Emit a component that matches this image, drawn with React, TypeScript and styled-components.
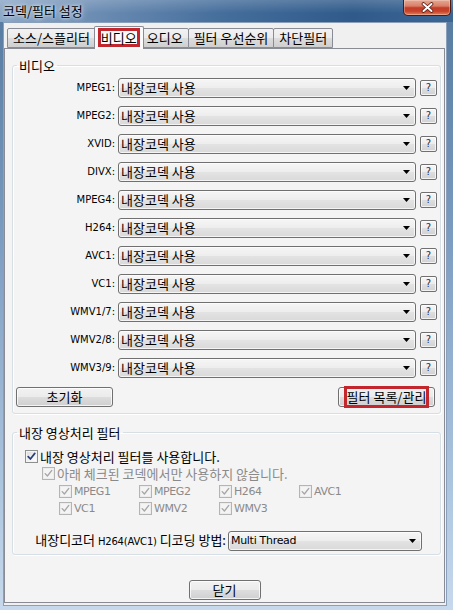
import React from "react";
import styled, { createGlobalStyle } from "styled-components";

const KO = `"Noto Sans CJK KR", "Noto Sans", sans-serif`;
const LAT = `"DejaVu Sans", "Noto Sans", sans-serif`;

const GlobalStyle = createGlobalStyle`
  html, body { margin: 0; padding: 0; }
  body {
    width: 453px; height: 610px; overflow: hidden;
    background: #6d8fb6;
    font-family: ${KO};
  }
  * { box-sizing: border-box; }
`;

const Window = styled.div`
  width: 453px;
  height: 610px;
  display: flex;
  flex-direction: column;
  background: linear-gradient(#54799f 0%, #7d9dc2 40%, #b3cbe3 85%, #c7d9ec 100%);
`;

const TitleBar = styled.div`
  height: 22px;
  flex: none;
  display: flex;
  align-items: flex-start;
  justify-content: space-between;
  background:
    linear-gradient(rgba(255,255,255,0.18), rgba(255,255,255,0) 60%),
    linear-gradient(to right, #8aa6c6 0%, #6a8bb2 22%, #446d9b 50%, #2f5a8a 78%, #3b6694 100%);
`;

const Title = styled.div`
  padding-left: 3px;
  font: 13px/21px ${KO};
  color: #000;
  text-shadow: 0 0 6px rgba(255,255,255,0.9), 0 0 3px rgba(255,255,255,0.8);
`;

const CloseButton = styled.div`
  width: 48px;
  height: 16px;
  margin-right: 2px;
  border: 1px solid #4a1c16;
  border-top: none;
  border-radius: 0 0 5px 5px;
  background: linear-gradient(#e6a894 0%, #d98068 40%, #c43c27 52%, #c8432b 75%, #e0835c 100%);
  box-shadow: inset 0 0 0 1px rgba(255,230,220,0.35);
  display: flex;
  align-items: center;
  justify-content: center;
`;

const Frame = styled.div`
  flex: 1;
  display: flex;
  padding: 0 6px 4px 3px;
`;

const Client = styled.div`
  flex: 1;
  display: flex;
  flex-direction: column;
  background: #f0f0f0;
  border: 1px solid #8aa0ba;
`;

const TabStrip = styled.div`
  height: 25px;
  flex: none;
  display: flex;
  align-items: flex-end;
  padding-left: 3px;
  position: relative;
  z-index: 1;
`;

const Tab = styled.div<{ $active?: boolean }>`
  height: ${(p) => (p.$active ? "23px" : "20px")};
  margin: ${(p) => (p.$active ? "0 -2px -1px -2px" : "0 0 0 -1px")};
  padding: ${(p) => (p.$active ? "0 3px" : "0 5px")};
  border: 1px solid #898c95;
  border-bottom: ${(p) => (p.$active ? "none" : "1px solid #898c95")};
  border-radius: 2px 2px 0 0;
  background: ${(p) =>
    p.$active
      ? "#fbfbfb"
      : "linear-gradient(#f2f2f2 0%, #ebebeb 50%, #dddddd 50%, #cfcfcf 100%)"};
  display: flex;
  align-items: ${(p) => (p.$active ? "flex-start" : "center")};
  padding-top: ${(p) => (p.$active ? "1px" : "0")};
  font: 13px/16px ${KO};
  color: #000;
  position: relative;
  z-index: ${(p) => (p.$active ? 2 : 1)};
  &:first-child { margin-left: 0; }
`;

const Marked = styled.span<{ $h: number }>`
  display: inline-flex;
  align-items: center;
  height: ${(p) => p.$h}px;
  border: 3px solid #c4262d;
  padding: 0;
  white-space: nowrap;
`;

const Panel = styled.div`
  flex: 1;
  margin: 0 1px 2px 0;
  border: 1px solid #898c95;
  background: #f4f4f4;
  padding: 9px 3px 0 7px;
  display: flex;
  flex-direction: column;
`;

const Group = styled.fieldset<{ $spaced?: boolean }>`
  margin: ${(p) => (p.$spaced ? "11px" : "0")} 0 0 0;
  padding: 0 0 6px 0;
  min-width: 0;
  border: 1px solid #d5dfe5;
  border-radius: 3px;
  box-shadow: inset 1px 1px 0 #fff, 1px 1px 0 #fff;
`;

const Legend = styled.legend`
  margin-left: 4px;
  padding: 0 2px;
  font: 13px/15px ${KO};
  color: #000;
`;

const CodecGrid = styled.div`
  display: grid;
  grid-template-columns: 102px 298px 17px;
  grid-auto-rows: 20px;
  column-gap: 3px;
  row-gap: 8px;
  margin-top: 5px;
  align-items: center;
`;

const CodecLabel = styled.div`
  text-align: right;
  font: 10px/20px ${LAT};
  color: #000;
`;

const Combo = styled.div<{ $w?: number }>`
  height: 20px;
  ${(p) => (p.$w ? `width: ${p.$w}px;` : "")}
  border: 1px solid #707070;
  border-radius: 3px;
  background: linear-gradient(#f6f6f6 0%, #ededed 50%, #e3e3e3 51%, #d9d9d9 100%);
  box-shadow: inset 0 0 0 1px rgba(255,255,255,0.7);
  display: flex;
  align-items: center;
  justify-content: space-between;
  padding: 0 5px 0 2px;
`;

const ComboText = styled.span<{ $latin?: boolean }>`
  font: ${(p) => (p.$latin ? `11px/18px ${LAT}` : `13px/18px ${KO}`)};
  ${(p) => (p.$latin ? "letter-spacing: -0.3px;" : "")}
  color: #000;
  white-space: nowrap;
`;

const HelpButton = styled.div`
  width: 17px;
  height: 16px;
  margin-left: 1px;
  border: 1px solid #707070;
  border-radius: 2px;
  background: linear-gradient(#f6f6f6 0%, #ececec 50%, #dedede 51%, #d2d2d2 100%);
  box-shadow: inset 0 0 0 1px rgba(255,255,255,0.7);
  display: flex;
  align-items: center;
  justify-content: center;
  font: 10px/14px ${LAT};
  color: #1e2f50;
`;

const ButtonRow = styled.div`
  display: flex;
  justify-content: space-between;
  margin-top: 9px;
  padding: 0 5px 0 3px;
`;

const PushButton = styled.div<{ $w: number }>`
  width: ${(p) => p.$w}px;
  height: 20px;
  border: 1px solid #707070;
  border-radius: 3px;
  background: linear-gradient(#f2f2f2 0%, #ebebeb 50%, #dddddd 51%, #cfcfcf 100%);
  box-shadow: inset 0 0 0 1px rgba(255,255,255,0.75);
  display: flex;
  align-items: center;
  justify-content: center;
  font: 13px/18px ${KO};
  color: #000;
`;

const CheckRow = styled.div<{ $indent: number }>`
  height: 17px;
  display: flex;
  align-items: center;
  padding-left: ${(p) => p.$indent}px;
`;

const CheckRowFirst = styled(CheckRow)`
  margin-top: 8px;
`;

const CheckGrid = styled.div`
  display: grid;
  grid-template-columns: repeat(4, 80px);
  grid-auto-rows: 17px;
  padding-left: 46px;
  margin-top: 1px;
`;

const CheckItem = styled.div`
  display: flex;
  align-items: center;
`;

const Box = styled.span<{ $disabled?: boolean }>`
  width: 13px;
  height: 13px;
  flex: none;
  border: 1px solid ${(p) => (p.$disabled ? "#b4b4b4" : "#8e8f8f")};
  background: ${(p) =>
    p.$disabled ? "#f4f4f4" : "linear-gradient(135deg, #d6d6d6 0%, #f4f4f4 60%, #ffffff 100%)"};
  box-shadow: inset 0 0 0 1px ${(p) => (p.$disabled ? "#ececec" : "#f4f4f4")};
  display: flex;
  align-items: center;
  justify-content: center;
  margin-right: 2px;
`;

const CheckLabel = styled.span<{ $disabled?: boolean; $latin?: boolean }>`
  font: ${(p) => (p.$latin ? `11px/17px ${LAT}` : `13px/17px ${KO}`)};
  ${(p) => (p.$latin ? "letter-spacing: -0.4px;" : "")}
  color: ${(p) => (p.$disabled ? "#8a8a8a" : "#000")};
  white-space: nowrap;
`;

const DecodeRow = styled.div`
  display: flex;
  align-items: center;
  justify-content: flex-end;
  margin-top: 12px;
  padding-right: 18px;
  margin-bottom: -4px;
`;

const DecodeLabel = styled.span`
  font: 13px/21px ${KO};
  color: #000;
  margin-right: 2px;
  white-space: nowrap;
`;

const SmallLatin = styled.span`
  font: 10px/21px ${LAT};
  letter-spacing: -0.2px;
`;

const Footer = styled.div`
  display: flex;
  justify-content: center;
  padding-top: 25px;
  padding-right: 4px;
`;

const Check = ({ disabled }: { disabled?: boolean }) => (
  <Box $disabled={disabled}>
    <svg width="9" height="9" viewBox="0 0 9 9">
      <path
        d="M1.2 4.6 L3.4 7 L7.8 1.4"
        fill="none"
        stroke={disabled ? "#a6a6a6" : "#28407a"}
        strokeWidth={disabled ? 1.3 : 1.7}
        strokeLinecap="round"
        strokeLinejoin="round"
      />
    </svg>
  </Box>
);

const Arrow = () => (
  <svg width="7" height="4" viewBox="0 0 7 4">
    <path d="M0 0 H7 L3.5 4 Z" fill="#000" />
  </svg>
);

const tabs = ["소스/스플리터", "비디오", "오디오", "필터 우선순위", "차단필터"];
const codecs = ["MPEG1", "MPEG2", "XVID", "DIVX", "MPEG4", "H264", "AVC1", "VC1", "WMV1/7", "WMV2/8", "WMV3/9"];
const filterCodecs = ["MPEG1", "MPEG2", "H264", "AVC1", "VC1", "WMV2", "WMV3"];

export default function App() {
  return (
    <>
      <GlobalStyle />
      <Window>
        <TitleBar>
          <Title>코덱/필터 설정</Title>
          <CloseButton>
            <svg width="13" height="11" viewBox="0 0 13 11">
              <path d="M2.5 2 L10.5 9 M10.5 2 L2.5 9" stroke="#5a1c14" strokeWidth="3.6" strokeLinecap="round" />
              <path d="M2.5 2 L10.5 9 M10.5 2 L2.5 9" stroke="#ffffff" strokeWidth="2" strokeLinecap="round" />
            </svg>
          </CloseButton>
        </TitleBar>
        <Frame>
          <Client>
            <TabStrip>
              {tabs.map((t) =>
                t === "비디오" ? (
                  <Tab key={t} $active>
                    <Marked $h={19}>{t}</Marked>
                  </Tab>
                ) : (
                  <Tab key={t}>{t}</Tab>
                )
              )}
            </TabStrip>
            <Panel>
              <Group>
                <Legend>비디오</Legend>
                <CodecGrid>
                  {codecs.map((c) => (
                    <React.Fragment key={c}>
                      <CodecLabel>{c}:</CodecLabel>
                      <Combo>
                        <ComboText>내장코덱 사용</ComboText>
                        <Arrow />
                      </Combo>
                      <HelpButton>?</HelpButton>
                    </React.Fragment>
                  ))}
                </CodecGrid>
                <ButtonRow>
                  <PushButton $w={97}>초기화</PushButton>
                  <PushButton $w={97}>
                    <Marked $h={22}>필터 목록/관리</Marked>
                  </PushButton>
                </ButtonRow>
              </Group>
              <Group $spaced>
                <Legend>내장 영상처리 필터</Legend>
                <CheckRowFirst $indent={12}>
                  <Check />
                  <CheckLabel>내장 영상처리 필터를 사용합니다.</CheckLabel>
                </CheckRowFirst>
                <CheckRow $indent={29}>
                  <Check disabled />
                  <CheckLabel $disabled>아래 체크된 코덱에서만 사용하지 않습니다.</CheckLabel>
                </CheckRow>
                <CheckGrid>
                  {filterCodecs.map((c) => (
                    <CheckItem key={c}>
                      <Check disabled />
                      <CheckLabel $disabled $latin>{c}</CheckLabel>
                    </CheckItem>
                  ))}
                </CheckGrid>
                <DecodeRow>
                  <DecodeLabel>
                    내장디코더 <SmallLatin>H264(AVC1)</SmallLatin> 디코딩 방법:
                  </DecodeLabel>
                  <Combo $w={194}>
                    <ComboText $latin>Multi Thread</ComboText>
                    <Arrow />
                  </Combo>
                </DecodeRow>
              </Group>
              <Footer>
                <PushButton $w={72}>닫기</PushButton>
              </Footer>
            </Panel>
          </Client>
        </Frame>
      </Window>
    </>
  );
}
